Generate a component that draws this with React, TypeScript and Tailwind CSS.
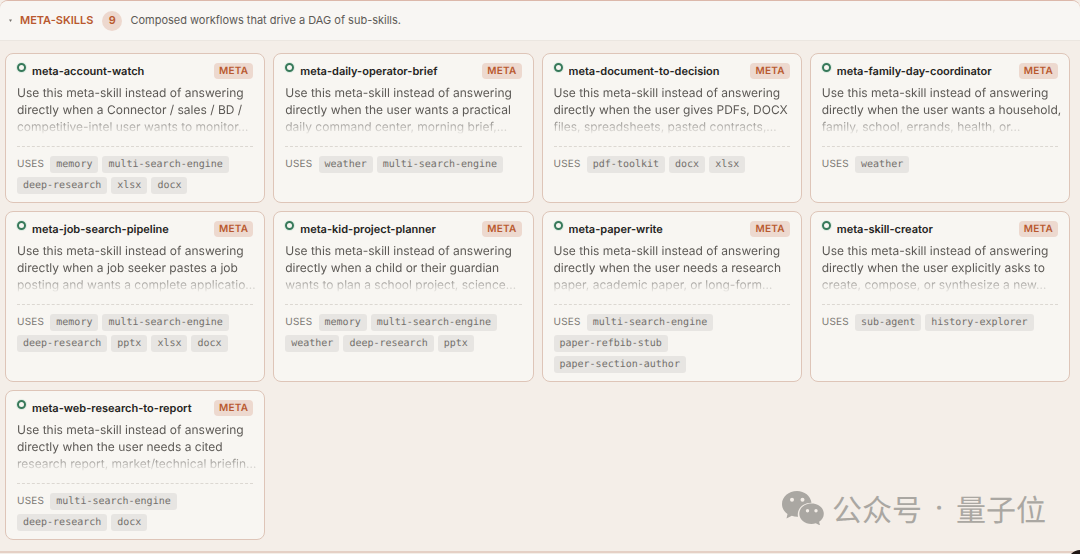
import { useState } from "react"

interface Skill {
  name: string
  summary: string
  uses: string[]
}

const skills: Skill[] = [
  {
    name: "meta-account-watch",
    summary: "Use this meta-skill instead of answering\ndirectly when a Connector / sales / BD /\ncompetitive-intel user wants to monitor…",
    uses: ["memory", "multi-search-engine", "deep-research", "xlsx", "docx"],
  },
  {
    name: "meta-daily-operator-brief",
    summary: "Use this meta-skill instead of answering\ndirectly when the user wants a practical\ndaily command center, morning brief,…",
    uses: ["weather", "multi-search-engine"],
  },
  {
    name: "meta-document-to-decision",
    summary: "Use this meta-skill instead of answering\ndirectly when the user gives PDFs, DOCX\nfiles, spreadsheets, pasted contracts,…",
    uses: ["pdf-toolkit", "docx", "xlsx"],
  },
  {
    name: "meta-family-day-coordinator",
    summary: "Use this meta-skill instead of answering\ndirectly when the user wants a household,\nfamily, school, errands, health, or…",
    uses: ["weather"],
  },
  {
    name: "meta-job-search-pipeline",
    summary: "Use this meta-skill instead of answering\ndirectly when a job seeker pastes a job\nposting and wants a complete applicatio…",
    uses: ["memory", "multi-search-engine", "deep-research", "pptx", "xlsx", "docx"],
  },
  {
    name: "meta-kid-project-planner",
    summary: "Use this meta-skill instead of answering\ndirectly when a child or their guardian\nwants to plan a school project, science…",
    uses: ["memory", "multi-search-engine", "weather", "deep-research", "pptx"],
  },
  {
    name: "meta-paper-write",
    summary: "Use this meta-skill instead of answering\ndirectly when the user needs a research\npaper, academic paper, or long-form…",
    uses: ["multi-search-engine", "paper-refbib-stub", "paper-section-author"],
  },
  {
    name: "meta-skill-creator",
    summary: "Use this meta-skill instead of answering\ndirectly when the user explicitly asks to\ncreate, compose, or synthesize a new…",
    uses: ["sub-agent", "history-explorer"],
  },
  {
    name: "meta-web-research-to-report",
    summary: "Use this meta-skill instead of answering\ndirectly when the user needs a cited\nresearch report, market/technical briefin…",
    uses: ["multi-search-engine", "deep-research", "docx"],
  },
]

function SkillCard({ skill }: { skill: Skill }) {
  return (
    <article className="min-w-0 rounded-lg border border-[#dec5b8] bg-[#f8f6f2] px-[11px] pt-[9px] pb-2">
      <div className="flex items-start">
        <span className="mr-1.5 h-[9px] w-[9px] shrink-0 rounded-full border-2 border-[#37795a] bg-[#f8f6f2] ring-1 ring-[#dfebe2]" />
        <h3 className="min-w-0 flex-1 truncate text-[11px] leading-4 font-semibold text-[#242321]">{skill.name}</h3>
        <span className="rounded bg-[#edd9cf] px-[5px] text-[10px] leading-4 font-semibold tracking-wide text-[#b9592f]">
          META
        </span>
      </div>

      <p className="mt-[5px] -mr-2 overflow-hidden mask-b-from-60% mask-b-to-100% text-xs leading-[17px] whitespace-pre text-[#5d5a56]">
        {skill.summary}
      </p>

      {/* Sub-skills */}
      <div className="mt-[11px] flex flex-wrap items-center gap-1 border-t border-dashed border-[#dcd8d2] pt-[9px]">
        <span className="mr-0.5 text-[10px] leading-[17px] tracking-wide text-[#7b7873]">USES</span>
        {skill.uses.map((name) => (
          <code
            key={name}
            className="rounded-[3px] bg-[#e7e5e2] px-1.5 font-['DejaVu_Sans_Mono',monospace] text-[10px] leading-[17px] text-[#73706c]"
          >
            {name}
          </code>
        ))}
      </div>
    </article>
  )
}

function WeChatIcon() {
  return (
    <svg viewBox="0 0 42 34" className="h-[34px] w-[42px]" fill="currentColor" aria-hidden="true">
      <path
        fillRule="evenodd"
        d="M15 0C6.700 0 0 5.700 0 13c0 4 2 7.600 5.500 10L4.500 27.500l5.300-2.700c2 .6 4 1 6.200.9C14.500 18 21 11.500 29.500 11.700 28.500 5 22.500 0 15 0ZM10 6.800a2 2 0 1 1 0 4 2 2 0 0 1 0-4Zm10.500 0a2 2 0 1 1 0 4 2 2 0 0 1 0-4Z"
      />
      <path
        fillRule="evenodd"
        d="M29.500 12.500c-6.800 0-12.200 4.500-12.200 10.200s5.400 10.200 12.200 10.200c1.500 0 3-.2 4.300-.6l4.200 2.100-.9-3.600c2.900-1.900 4.700-4.800 4.700-8.100 0-5.700-5.500-10.200-12.300-10.200ZM25.500 18a1.700 1.700 0 1 1 0 3.400 1.700 1.700 0 0 1 0-3.400Zm8.500 0a1.700 1.700 0 1 1 0 3.400 1.700 1.700 0 0 1 0-3.400Z"
      />
    </svg>
  )
}

export default function App() {
  const [open, setOpen] = useState(true)

  return (
    <main className="relative min-h-screen overflow-hidden bg-[#f4eee8] font-['Inter',sans-serif] [text-rendering:geometricPrecision]">
      <section className="rounded-t-lg border-t border-b-2 border-t-[#dcb8aa] border-b-[#e5d0c5]">
        <button
          type="button"
          aria-expanded={open}
          onClick={() => setOpen(!open)}
          className="flex h-10 w-full items-center rounded-t-lg border-b border-[#ebe6e0] bg-[#f8f6f3] pl-[9px] text-left text-[11px]"
        >
          <svg viewBox="0 0 4 4" className="mr-2 h-[3px] w-[3px]" fill="#77736e" aria-hidden="true">
            <path d="M0 .5h4L2 4Z" />
          </svg>
          <span className="font-semibold text-[#b9592f]">META-SKILLS</span>
          <span className="mr-2 ml-[9px] flex h-5 w-5 items-center justify-center rounded-full bg-[#edd8ce] font-semibold text-[#b9592f]">
            9
          </span>
          <span className="text-[#5d5a56]">Composed workflows that drive a DAG of sub-skills.</span>
        </button>

        {open && (
          <div className="grid grid-cols-4 gap-2 pt-3 pr-[10px] pb-[11px] pl-[5px]">
            {skills.map((skill) => (
              <SkillCard key={skill.name} skill={skill} />
            ))}
          </div>
        )}
      </section>

      {/* Watermark */}
      <div className="absolute right-[34px] bottom-[26px] flex items-center gap-2 text-[#aaa7a2]">
        <WeChatIcon />
        <div className="flex items-center font-['Noto_Sans_CJK_SC',sans-serif] text-[30px] leading-10">
          <span>公众号</span>
          <span className="w-[34px] text-center font-['Inter',sans-serif]">·</span>
          <span>量子位</span>
        </div>
      </div>
      <span className="absolute -right-3 -bottom-5 h-6 w-6 rounded-full bg-[#201715]" />
    </main>
  )
}
